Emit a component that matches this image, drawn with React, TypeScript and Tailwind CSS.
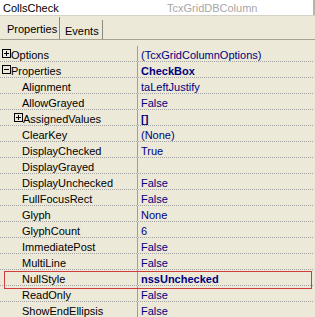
import React from 'react';

type Row = {
  name: string;
  value: string;
  level: 0 | 1;
  expand?: '+' | '-';
  bold?: boolean;
};

const ROWS: Row[] = [
  { name: 'Options', value: '(TcxGridColumnOptions)', level: 0, expand: '+' },
  { name: 'Properties', value: 'CheckBox', level: 0, expand: '-', bold: true },
  { name: 'Alignment', value: 'taLeftJustify', level: 1 },
  { name: 'AllowGrayed', value: 'False', level: 1 },
  { name: 'AssignedValues', value: '[]', level: 1, expand: '+', bold: true },
  { name: 'ClearKey', value: '(None)', level: 1 },
  { name: 'DisplayChecked', value: 'True', level: 1 },
  { name: 'DisplayGrayed', value: '', level: 1 },
  { name: 'DisplayUnchecked', value: 'False', level: 1 },
  { name: 'FullFocusRect', value: 'False', level: 1 },
  { name: 'Glyph', value: 'None', level: 1 },
  { name: 'GlyphCount', value: '6', level: 1 },
  { name: 'ImmediatePost', value: 'False', level: 1 },
  { name: 'MultiLine', value: 'False', level: 1 },
  { name: 'NullStyle', value: 'nssUnchecked', level: 1, bold: true },
  { name: 'ReadOnly', value: 'False', level: 1 },
  { name: 'ShowEndEllipsis', value: 'False', level: 1 },
];

function ExpandBox({ sign }: { sign: '+' | '-' }) {
  return (
    <svg width="9" height="9" viewBox="0 0 9 9" className="shrink-0" shapeRendering="crispEdges">
      <rect x="0.5" y="0.5" width="8" height="8" fill="none" stroke="#000" />
      <line x1="2" y1="4.5" x2="7" y2="4.5" stroke="#000" />
      {sign === '+' && <line x1="4.5" y1="2" x2="4.5" y2="7" stroke="#000" />}
    </svg>
  );
}

export default function App() {
  return (
    <div
      className="relative w-[315px] h-[317px] overflow-hidden bg-[#ece9d8] text-[11px] text-black"
      style={{ fontFamily: '"Liberation Sans", Arial, sans-serif' }}
    >
      {/* Object selector combo */}
      <div className="flex h-[16px] bg-white border-b border-[#d6d3c6]">
        <div className="w-[164px] pl-[3px] pt-[1px] leading-[14px]">CollsCheck</div>
        <div className="flex-1 pl-[3px] pt-[1px] leading-[14px] text-[#a7a7a7]">TcxGridDBColumn</div>
        <div className="w-[2px] bg-[#b8b5a8]" />
      </div>

      {/* Tabs */}
      <div className="flex items-end h-[24px] border-b border-[#a5a293]">
        <div className="h-[22px] w-[60px] border-r border-[#8c8a80] pl-[7px] pt-[6px] leading-[13px]">
          Properties
        </div>
        <div className="h-[19px] w-[43px] border-r border-[#8c8a80] pl-[5px] pt-[5px] leading-[13px]">
          Events
        </div>
      </div>

      {/* Property grid */}
      <div className="pt-[6px] w-[313px]">
        {ROWS.map((row) => (
          <div key={row.name} className="flex h-[16px] border-b border-dotted border-[#a3a3a3]">
            <div
              className={`flex items-start pt-[3px] w-[138px] border-r border-[#a09e94] ${
                row.level === 0 ? 'pl-[2px]' : row.expand ? 'pl-[14px]' : 'pl-[22px]'
              }`}
            >
              {row.expand && <ExpandBox sign={row.expand} />}
              <span className="leading-[12px] whitespace-nowrap">{row.name}</span>
            </div>
            <div
              className={`flex-1 pl-[3px] pt-[3px] leading-[12px] text-[#000080] whitespace-nowrap overflow-hidden ${
                row.bold ? 'font-bold' : ''
              }`}
            >
              {row.value}
            </div>
          </div>
        ))}
      </div>

      {/* Highlight around NullStyle */}
      <div className="absolute left-[4px] top-[271px] w-[308px] h-[18px] border border-[#d03c3c]" />
    </div>
  );
}
